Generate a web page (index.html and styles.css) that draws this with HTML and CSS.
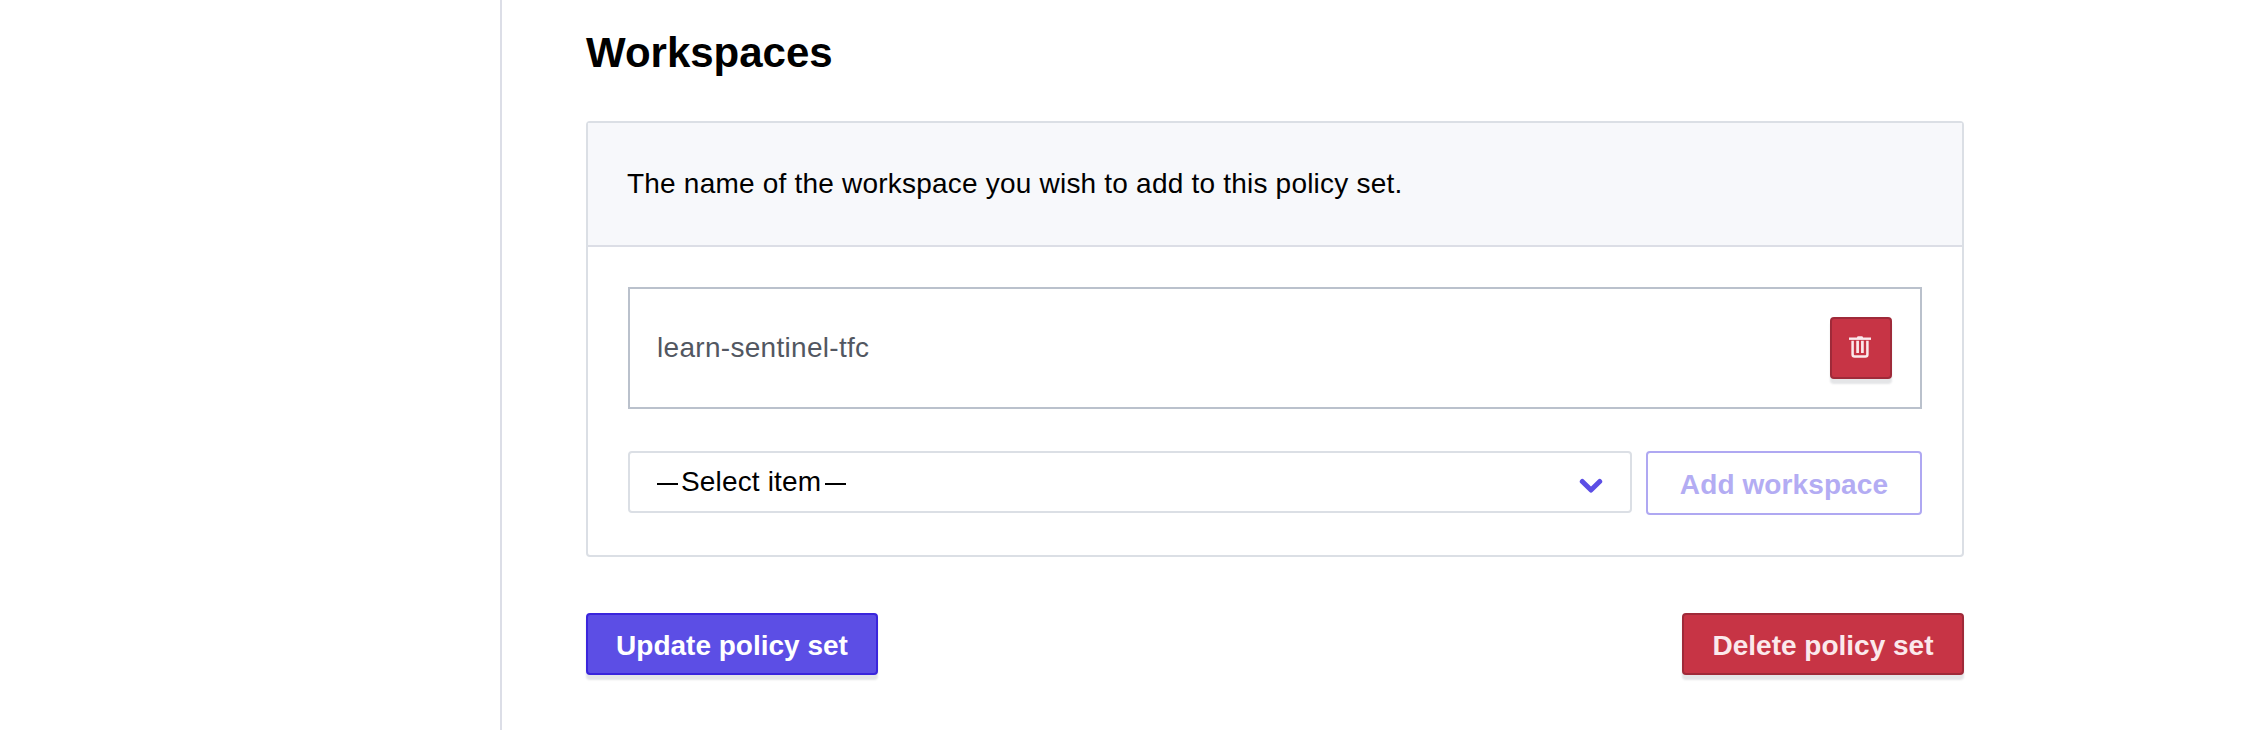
FILE: index.html
```html
<!DOCTYPE html>
<html lang="en">
<head>
<meta charset="utf-8">
<title>Policy set</title>
<link rel="stylesheet" href="styles.css">
</head>
<body>
<div class="layout">
  <aside class="sidebar"></aside>
  <main class="content">
    <h2 class="title">Workspaces</h2>
    <section class="card">
      <header class="card-header">The name of the workspace you wish to add to this policy set.</header>
      <div class="card-body">
        <div class="item">
          <span class="item-name">learn-sentinel-tfc</span>
          <button class="btn btn-danger btn-icon" aria-label="Remove">
            <svg width="22" height="22" viewBox="0 0 22 22" fill="none" stroke="currentColor">
              <path d="M0 2.700H22" stroke-width="2.400"/>
              <path d="M8 1.500Q8 .2 9.300 .2H12.700Q14 .2 14 1.500V2H8Z" fill="currentColor" stroke="none"/>
              <path d="M3.600 4.800V18.400Q3.600 20.400 5.600 20.400H16.400Q18.400 20.400 18.400 18.400V4.800" stroke-width="2.500"/>
              <path d="M8.600 4.800V17M13.400 4.800V17" stroke-width="2.700"/>
            </svg>
          </button>
        </div>
        <div class="add-row">
          <div class="select">
            <span class="select-value"><i class="dash"></i><span class="select-text">Select item</span><i class="dash"></i></span>
            <svg width="24" height="16" viewBox="0 0 24 16" fill="none" stroke="#5c4ee5" stroke-width="5" stroke-linecap="round" stroke-linejoin="round"><path d="M3.300 3.500L12 12L20.700 3.500"/></svg>
          </div>
          <button class="btn btn-outline" disabled>Add workspace</button>
        </div>
      </div>
    </section>
    <footer class="actions">
      <button class="btn btn-primary">Update policy set</button>
      <button class="btn btn-danger btn-delete">Delete policy set</button>
    </footer>
  </main>
</div>
</body>
</html>
```
FILE: styles.css
```css
* { box-sizing: border-box; }
body {
  margin: 0;
  background: #fff;
  color: #000;
  font: 28px/40px "Liberation Sans", Arial, sans-serif;
}
.layout { display: flex; height: 730px; overflow: hidden; }
.sidebar { width: 502px; flex: none; border-right: 2px solid #dcdee7; }
.content { width: 1462px; padding: 28px 0 0 84px; }
.title { margin: 0 0 43px; font-size: 42px; line-height: 50px; font-weight: 700; white-space: nowrap; }
.card { border: 2px solid #dbdfe5; border-radius: 4px; height: 436px; }
.card-header {
  height: 124px;
  padding: 41px 39px 0;
  background: #f7f8fb;
  border-bottom: 2px solid #dcdee6;
  letter-spacing: .21px;
  white-space: nowrap;
}
.card-body { padding: 40px; }
.item {
  height: 122px;
  border: 2px solid #bac1cc;
  padding: 0 28px 0 27px;
  display: flex;
  align-items: center;
  justify-content: space-between;
  color: #525761;
}
.item-name { letter-spacing: .3px; }
.add-row { display: flex; align-items: flex-start; gap: 14px; margin-top: 42px; }
.select {
  flex: 1;
  height: 62px;
  border: 2px solid #dbdfe5;
  border-radius: 4px;
  padding: 0 27px;
  display: flex;
  align-items: center;
  justify-content: space-between;
}
.select svg { margin-top: 7px; }
.select-value { display: flex; align-items: center; white-space: nowrap; margin-top: -1px; }
.dash { width: 21px; height: 2px; background: #000; margin-top: 4px; }
.select-text { margin: 0 4px 0 3px; letter-spacing: .15px; }
.btn {
  height: 62px;
  padding: 3px 0 0;
  border: 2px solid;
  border-radius: 4px;
  font: 700 28px/40px "Liberation Sans", Arial, sans-serif;
  display: flex;
  align-items: center;
  justify-content: center;
  white-space: nowrap;
}
.btn-danger {
  background: #c73445;
  border-color: #9f2a39;
  color: #fbe9ec;
  box-shadow: 0 5px 2px rgba(37, 41, 55, .12);
}
.btn-icon { width: 62px; padding: 0 2px 2px 0; }
.btn-outline {
  width: 276px;
  height: 64px;
  padding-top: 4px;
  background: #fff;
  border-color: #afa8f2;
  color: #b3acf3;
  letter-spacing: .1px;
}
.btn-primary {
  width: 292px;
  background: #5c4ee5;
  border-color: #3a25dc;
  color: #fff;
  box-shadow: 0 5px 2px rgba(37, 41, 55, .12);
}
.btn-delete { width: 282px; }
.actions { display: flex; justify-content: space-between; margin-top: 56px; }
```
